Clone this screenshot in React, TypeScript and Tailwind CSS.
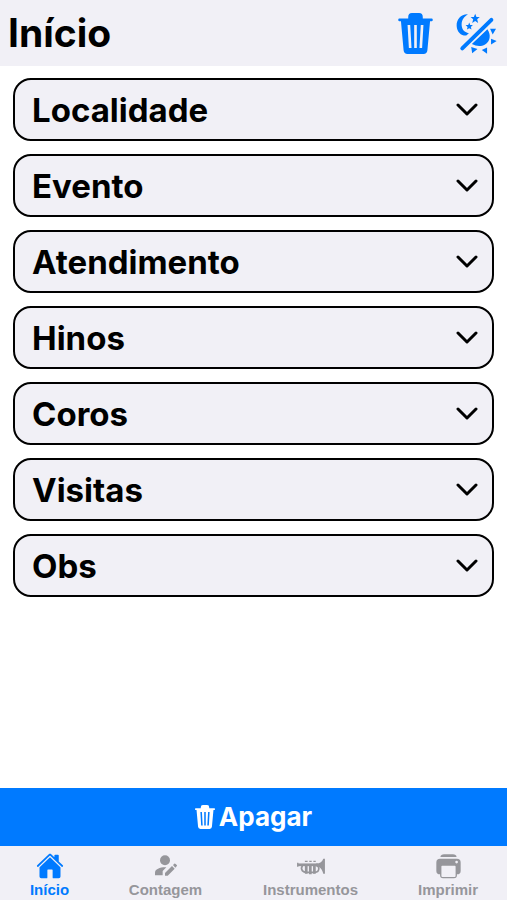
import { IoHome } from "react-icons/io5";

const sections = [
  "Localidade",
  "Evento",
  "Atendimento",
  "Hinos",
  "Coros",
  "Visitas",
  "Obs",
];

function TrashIcon({ className }: { className?: string }) {
  return (
    <svg className={className} viewBox="0 0 104 124" fill="currentColor" fillRule="evenodd" aria-hidden="true">
      <path d="M0 19Q0 17 3 17H30V12Q30 0 41 0H63Q74 0 74 12V17H101Q104 17 104 19V22Q104 25 101 25H96L88 113Q87 124 76 124H28Q17 124 16 113L8 25H3Q0 25 0 22ZM28 36L32 106H40L36 36ZM48 36V106H56V36ZM68 36L64 106H72L76 36Z" />
    </svg>
  );
}

function ThemeIcon({ className }: { className?: string }) {
  return (
    <svg className={className} viewBox="18 18 124 124" fill="currentColor" aria-hidden="true">
      <path d="M54 22C33 21 19 38 20 57C21 76 34 87 49 86L57 79C42 77 35 66 35 53C35 39 43 29 54 22Z" />
      <path d="M76 20L80 30H90L82 37L85 48L76 42L67 48L70 37L62 30H72Z" />
      <path d="M58 47L61 54H69L63 60L65 68L58 64L51 68L53 60L47 54H55Z" />
      <path d="M37 125L125 39" stroke="currentColor" strokeWidth="12" strokeLinecap="round" />
      <path d="M66 112L113 67C125 84 121 105 106 113C94 120 80 119 66 112Z" />
      <path d="M121 66H139L129 83ZM124 96L141 103L124 113ZM96 130L112 122V141ZM64 121L83 127L67 140Z" />
    </svg>
  );
}

function PersonEditIcon({ className }: { className?: string }) {
  return (
    <svg className={className} viewBox="0 0 66 66" fill="currentColor" aria-hidden="true">
      <circle cx="30" cy="16" r="15" />
      <path d="M0 61V53C0 43 14 37 31 37H34L23 48V61Z" />
      <path d="M30 54L51 33L59 41L38 62H30Z" />
      <path d="M54 30L58 26Q60 25 62 27L65 30Q67 32 65 34L61 38Z" />
    </svg>
  );
}

function TrumpetIcon({ className }: { className?: string }) {
  return (
    <svg className={className} viewBox="0 0 82 50" fill="none" stroke="currentColor" aria-hidden="true">
      <path d="M2 14V26" strokeWidth="4" />
      <path d="M2 20H62" strokeWidth="8" />
      <path d="M56 16C68 16 74 10 77 2H82V46H77C74 33 68 25 56 25Z" fill="currentColor" stroke="none" />
      <path d="M23 10H31M36 10H43M48 10H55" strokeWidth="4" />
      <path d="M27 20V46M39 20V48M51 20V46" strokeWidth="8" />
      <path d="M16 23Q10 30 16 38Q20 42 27 42H52Q64 42 64 30Q64 25 59 22" strokeWidth="5" />
    </svg>
  );
}

function PrinterIcon({ className }: { className?: string }) {
  return (
    <svg className={className} viewBox="0 0 74 74" fill="currentColor" fillRule="evenodd" aria-hidden="true">
      <path d="M13 9Q14 1 24 1H50Q60 1 61 9Z" />
      <path d="M12 14H62Q73 14 73 25V50Q73 60 62 60V63Q62 72 53 72H21Q12 72 12 63V60Q1 60 1 50V25Q1 14 12 14ZM18 35Q16 35 16 37V65Q16 68 19 68H55Q58 68 58 65V37Q58 35 56 35ZM61 20A4 4 0 1 0 61 28A4 4 0 1 0 61 20Z" />
    </svg>
  );
}

const tabs = [
  { label: "Início", icon: <IoHome className="size-7" />, color: "text-[#007aff]", width: "w-[99px]" },
  { label: "Contagem", icon: <PersonEditIcon className="size-[22px]" />, color: "text-[#96969b]", width: "w-[133px]" },
  { label: "Instrumentos", icon: <TrumpetIcon className="h-[17px] w-7" />, color: "text-[#96969b]", width: "w-[157px]" },
  { label: "Imprimir", icon: <PrinterIcon className="size-[25px]" />, color: "text-[#96969b]", width: "w-[118px]" },
];

export default function App() {
  return (
    <div className="flex min-h-screen flex-col bg-white font-['Inter',sans-serif] text-black">
      <header className="flex h-[66px] items-center justify-between bg-[#f1f0f6] pr-2.5 pl-2">
        <h1 className="text-[39px] leading-10 font-bold">Início</h1>
        <div className="flex items-center gap-[23px]">
          <button type="button" aria-label="Apagar tudo" className="text-[#007aff]">
            <TrashIcon className="h-[41px] w-[35px]" />
          </button>
          <button type="button" aria-label="Alternar tema" className="text-[#007aff]">
            <ThemeIcon className="size-[41px]" />
          </button>
        </div>
      </header>

      <main className="flex flex-1 flex-col gap-[13px] px-[13px] py-3">
        {sections.map((section) => (
          <button
            key={section}
            type="button"
            aria-expanded="false"
            className="flex h-[63px] items-center justify-between rounded-[18px] border-2 border-black bg-[#f1f0f6] pr-3.5 pl-[17px]"
          >
            <span className="text-[33px] leading-10 font-bold">{section}</span>
            <svg className="h-[13px] w-[22px]" viewBox="0 0 22 13" fill="none" stroke="currentColor" strokeWidth="3" strokeLinecap="round" strokeLinejoin="round" aria-hidden="true">
              <path d="M2 2L11 11L20 2" />
            </svg>
          </button>
        ))}
      </main>

      <button
        type="button"
        className="flex h-[58px] items-center justify-center gap-1 bg-[#007aff] text-white"
      >
        <TrashIcon className="h-6 w-5" />
        <span className="text-[26px] leading-8 font-bold">Apagar</span>
      </button>

      <nav className="flex h-[54px] justify-between bg-[#f1f0f6] font-['Liberation_Sans',sans-serif]">
        {tabs.map((tab) => (
          <a key={tab.label} href="#" className={`flex flex-col items-center pt-1 ${tab.width} ${tab.color}`}>
            <span className="flex h-8 items-center">{tab.icon}</span>
            <span className="text-[15px] leading-4 font-bold">{tab.label}</span>
          </a>
        ))}
      </nav>
    </div>
  );
}
